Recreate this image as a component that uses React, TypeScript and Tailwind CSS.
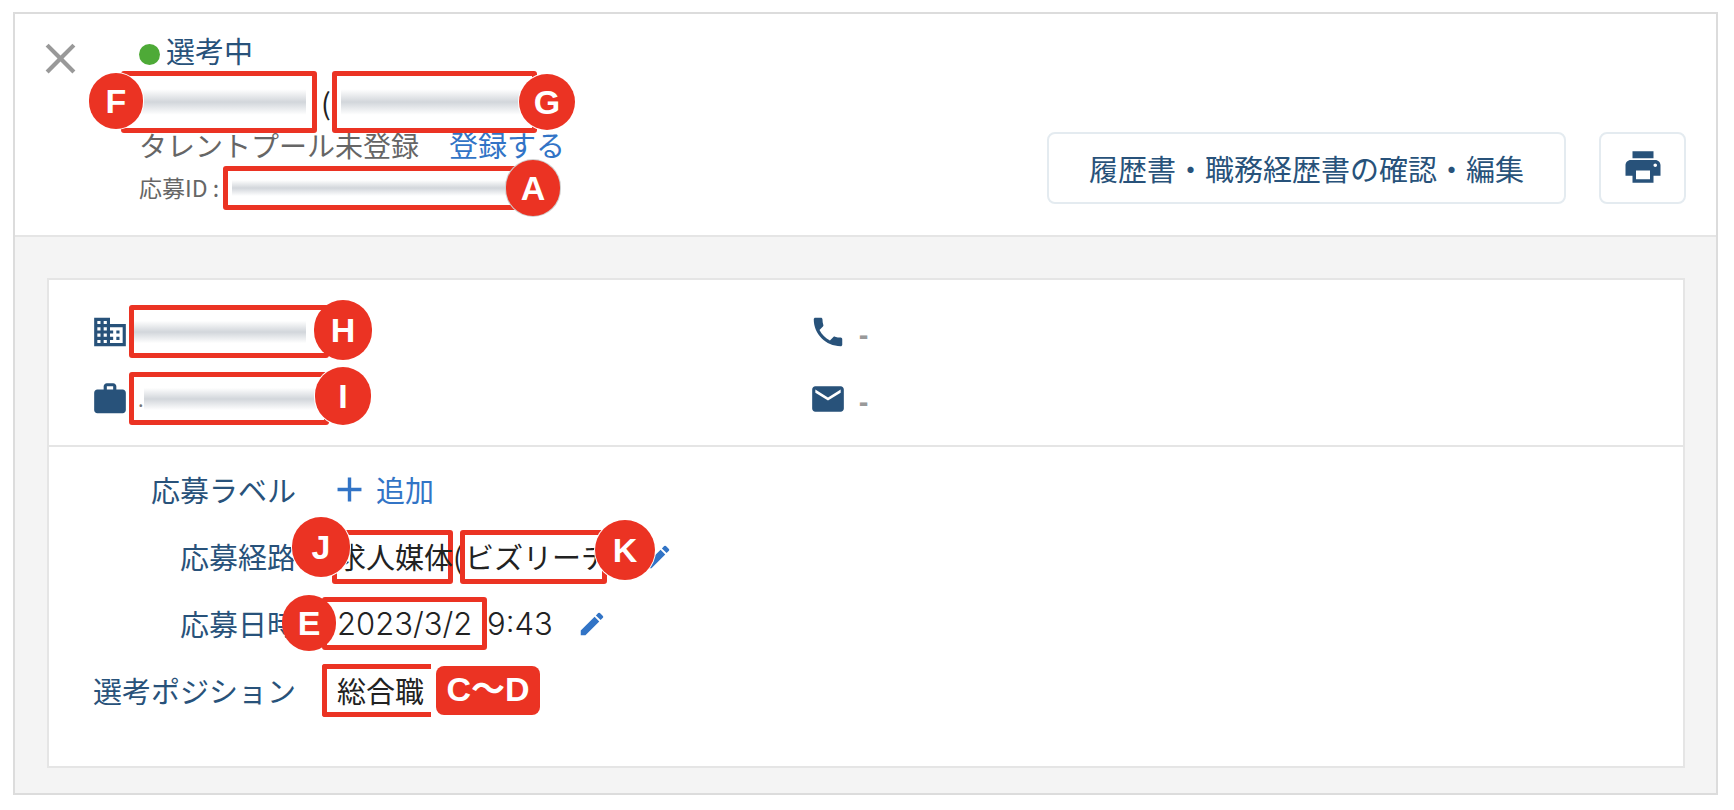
import type { ReactNode } from "react";
import {
  MdAdd,
  MdBusiness,
  MdClose,
  MdEdit,
  MdEmail,
  MdPhone,
  MdPrint,
  MdWork,
} from "react-icons/md";

function Frame({ className, children }: { className: string; children?: ReactNode }) {
  return (
    <span
      className={`relative flex shrink-0 items-center rounded-[3px] border-[5px] border-[#eb3323] ${className}`}
    >
      {children}
    </span>
  );
}

function Badge({ letter, className }: { letter: string; className: string }) {
  return (
    <span
      className={`absolute z-10 flex items-center justify-center rounded-full bg-[#eb3323] text-[34px] leading-none font-bold text-white font-['Liberation_Sans',sans-serif] ${className}`}
    >
      {letter}
    </span>
  );
}

function Masked({ className }: { className: string }) {
  return (
    <span
      className={`bg-linear-to-b from-transparent from-10% via-[#d2d6db] to-transparent to-90% ${className}`}
    />
  );
}

function DetailRow({ label, children }: { label: string; children: ReactNode }) {
  return (
    <div className="flex h-[67px] items-center">
      <dt className="w-[247px] shrink-0 text-right text-[#28527a]">{label}</dt>
      <dd className="relative ml-px flex items-center text-[#222]">{children}</dd>
    </div>
  );
}

function EditButton({ label, className }: { label: string; className: string }) {
  return (
    <button type="button" aria-label={label} className={`text-[#3274c6] ${className}`}>
      <MdEdit className="size-[30px]" />
    </button>
  );
}

function EmptyValue() {
  return <span className="pt-2 font-bold text-[#999] font-['Liberation_Sans',sans-serif]">-</span>;
}

export default function App() {
  return (
    <div className="bg-white pt-3 pr-4 pb-4 pl-[13px] text-[29px] leading-none whitespace-nowrap font-['Noto_Sans_CJK_JP',sans-serif]">
      <main className="border-2 border-[#dcdcdc] bg-[#f4f4f4]">
        <header className="flex items-start border-b-2 border-[#e5e5e5] bg-white pt-4 pr-[30px] pb-[21px]">
          <button type="button" aria-label="閉じる" className="ml-5 shrink-0 pt-[3px] text-[#999]">
            <MdClose className="size-[51px]" />
          </button>
          <div className="ml-[53px] flex flex-1 flex-col">
            <div className="flex h-11 items-center gap-[6px] pb-1 text-[#28527a]">
              <span className="mt-2 size-[21px] rounded-full bg-[#4eaa37]" />
              選考中
            </div>
            <div className="-ml-[18px] flex h-14 items-center">
              <Frame className="h-[62px] w-[196px]">
                <Masked className="ml-3 h-8 w-[168px]" />
                <Badge letter="F" className="-top-[3px] -left-[37px] h-14 w-[54px] ring-1 ring-white" />
              </Frame>
              <span className="w-[15px] pl-1 text-[#222]">(</span>
              <Frame className="h-[62px] w-[205px]">
                <Masked className="ml-1 h-8 w-[190px]" />
                <Badge letter="G" className="-top-[2px] -right-[43px] size-14 ring-1 ring-white" />
              </Frame>
            </div>
            <div className="flex h-8 items-center gap-[30px] pb-[3px] text-[#666]">
              <span className="text-[28px]">タレントプール未登録</span>
              <a href="#register" className="text-[#3274c6]">
                登録する
              </a>
            </div>
            <div className="flex h-[52px] items-center text-[23px] text-[#666]">
              <span className="w-[84px] pb-[2px]">応募ID :</span>
              <Frame className="h-11 w-[312px]">
                <Masked className="ml-1 h-5 w-[290px]" />
                <Badge letter="A" className="-top-[11px] -right-[30px] h-14 w-[54px] ring-1 ring-[#d0d0d0]" />
              </Frame>
            </div>
          </div>
          <div className="mt-[102px] flex gap-[33px] text-[#28527a]">
            <button
              type="button"
              className="h-[72px] rounded-lg border-2 border-[#e4ebf0] bg-white px-10"
            >
              履歴書・職務経歴書の確認・編集
            </button>
            <button
              type="button"
              aria-label="印刷"
              className="flex h-[72px] w-[87px] items-center justify-center rounded-lg border-2 border-[#e4ebf0] bg-white pb-[2px]"
            >
              <MdPrint className="size-[42px]" />
            </button>
          </div>
        </header>

        <div className="pt-[41px] pr-[31px] pb-[25px] pl-8">
          <section className="border-2 border-[#e5e5e5] bg-white">
            <div className="grid grid-cols-[13fr_15fr] border-b-2 border-[#e5e5e5] px-[42px] pt-[18px] pb-[13px] text-[#28527a]">
              <div className="flex h-[67px] items-center">
                <MdBusiness className="size-[38px]" />
                <Frame className="h-[53px] w-[200px]">
                  <Masked className="h-7 w-[172px]" />
                  <Badge letter="H" className="-top-[10px] -right-[48px] h-[60px] w-[58px]" />
                </Frame>
              </div>
              <div className="-ml-[2px] flex h-[67px] items-center gap-3">
                <MdPhone className="size-[38px]" />
                <EmptyValue />
              </div>
              <div className="flex h-[67px] items-center">
                <MdWork className="size-[38px]" />
                <Frame className="h-[53px] w-[200px]">
                  <span className="pl-1 text-xl text-[#777]">.</span>
                  <Masked className="h-7 w-[172px]" />
                  <Badge letter="I" className="-top-[10px] -right-[47px] h-[58px] w-14 ring-1 ring-white" />
                </Frame>
              </div>
              <div className="-ml-[2px] flex h-[67px] items-center gap-3">
                <MdEmail className="size-[38px]" />
                <EmptyValue />
              </div>
            </div>

            <dl className="pt-[9px] pb-[42px]">
              <DetailRow label="応募ラベル">
                <button type="button" className="ml-8 flex items-center gap-[6px] text-[#3274c6]">
                  <MdAdd className="size-[41px]" />
                  追加
                </button>
              </DetailRow>
              <DetailRow label="応募経路">
                <Frame className="ml-[35px] h-[54px] w-[121px]">求人媒体</Frame>
                <span className="w-[7px]">(</span>
                <Frame className="h-[54px] w-[147px]">
                  ビズリーチ
                  <Badge letter="K" className="-top-[15px] -right-[53px] size-[60px] ring-1 ring-white" />
                </Frame>
                <EditButton label="応募経路を編集" className="ml-[36px]" />
                <Badge letter="J" className="-top-[13px] -left-[5px] h-[60px] w-[58px] ring-1 ring-white" />
              </DetailRow>
              <DetailRow label="応募日時">
                <span className="flex items-center text-[31px] font-light font-['Inter',sans-serif]">
                  <Frame className="ml-[25px] h-[53px] w-[165px] pl-[10px]">
                    2023/3/2
                    <Badge letter="E" className="-top-[7px] -left-[45px] h-14 w-[54px]" />
                  </Frame>
                  9:43
                </span>
                <EditButton label="応募日時を編集" className="ml-[24px]" />
              </DetailRow>
              <DetailRow label="選考ポジション">
                <Frame className="ml-[25px] h-[53px] w-[109px] rounded-r-none border-r-0 pl-[10px]">
                  総合職
                </Frame>
                <span className="ml-[5px] flex h-[49px] w-[104px] items-center justify-center rounded-lg bg-[#eb3323] pb-1 text-[34px] font-bold text-white font-['Liberation_Sans','Noto_Sans_CJK_JP',sans-serif]">
                  C〜D
                </span>
              </DetailRow>
            </dl>
          </section>
        </div>
      </main>
    </div>
  );
}
